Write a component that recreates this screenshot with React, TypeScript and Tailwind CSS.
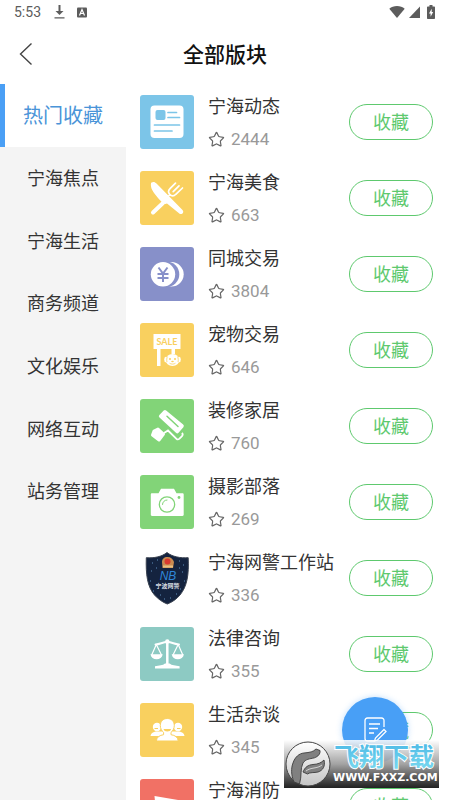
import { Star } from "lucide-react";
import type { ReactNode } from "react";

const NewsIcon = () => (
  <>
    <rect x="10.5" y="10.5" width="33" height="32.5" rx="4" fill="#fff" />
    <rect x="15.5" y="15" width="10" height="10" rx="2" fill="#7cc5e8" />
    <path
      d="M28 17.5h8.500M28 22.500h11.500M14.500 30h25M14.500 36h17.500"
      stroke="#7cc5e8"
      strokeWidth="1.700"
      strokeLinecap="round"
    />
  </>
);

const FoodIcon = () => (
  <>
    <path d="M13 41.5 23 32" stroke="#fff" strokeWidth="4" strokeLinecap="round" />
    <path
      d="M11.500 11.500c2-1.200 3.500-.5 5 .9l26 26.500c1.600 1.700.4 4.200-1.600 4.200-1 0-1.500-.3-2.200-1L27 32.500c-1.500.8-3.400.4-5-1.300-5-5.500-10.500-11-11-16-.2-1.800-.2-3 .5-3.700z"
      fill="#fff"
    />
    <path
      d="m35.500 12.200-5.500 5.500c-2 2-1.800 4-.2 5.800s4 2 6-.2l6.700-6.300M39 14.800l-5.800 5.800M30 23.500l-2 2"
      stroke="#fff"
      strokeWidth="1.700"
      strokeLinecap="round"
      fill="none"
    />
  </>
);

const YenIcon = () => (
  <>
    <circle cx="31.5" cy="27.300" r="12.200" fill="#fff" />
    <circle cx="26.500" cy="27.300" r="12.800" fill="#8790c9" />
    <circle cx="23" cy="27.300" r="12.200" fill="#fff" />
    <path
      d="m18.500 20.500 4.500 6 4.500-6M23 26.500v8.500M17.500 27h11M17.500 31h11"
      stroke="#8790c9"
      strokeWidth="2"
      fill="none"
    />
  </>
);

const SaleIcon = () => (
  <>
    <path d="M13.500 11h27v15h-5.500v5h-3.500v-5h-11v17H17V26h-3.500z" fill="#fff" />
    <text
      x="27"
      y="21.500"
      textAnchor="middle"
      className="font-['Lato'] text-[9px] font-bold"
      fill="#f9d05f"
    >
      SALE
    </text>
    <ellipse cx="32.500" cy="37" rx="7" ry="6" fill="#fff" />
    <ellipse cx="25.800" cy="36.500" rx="1.600" ry="2.800" fill="#fff" />
    <ellipse cx="39.200" cy="36.500" rx="1.600" ry="2.800" fill="#fff" />
    <path
      d="M27.500 33.500c-.8 1.500-1 4-.5 5.500M37.500 33.500c.8 1.500 1 4 .5 5.500M29.500 40.200c1.500 1.200 4.500 1.200 6 0"
      stroke="#f9d05f"
      strokeWidth=".8"
      fill="none"
    />
    <circle cx="30" cy="36" r="1" fill="#f9d05f" />
    <circle cx="35" cy="36" r="1" fill="#f9d05f" />
    <ellipse cx="32.500" cy="38.500" rx="1.300" ry=".8" fill="#f9d05f" />
  </>
);

const RollerIcon = () => (
  <>
    <path
      d="M25 12.800 42 27l-4.800 5.500L20.700 17.200z"
      fill="#fff"
      stroke="#fff"
      strokeWidth="3.600"
      strokeLinejoin="round"
    />
    <path d="m27 17.300 11 10.200" stroke="#82d478" strokeWidth="1.500" strokeLinecap="round" />
    <path
      d="m18 30 5.500 5-4.500 6-6.500-5 1.500-4z"
      fill="#fff"
      stroke="#fff"
      strokeWidth="3"
      strokeLinejoin="round"
    />
    <path
      d="m24 34 4-2.500 8.500 8.300c1 .9 2 .7 3-.2l2.500-2.500c1-1.100 1-2 0-3.200"
      stroke="#fff"
      strokeWidth="1.800"
      fill="none"
    />
  </>
);

const CameraIcon = () => (
  <>
    <path
      d="M12 18.300h6.500l2.500-4.600h13l2.500 4.600h6c.7 0 1.200.5 1.200 1.200v20.300c0 .7-.5 1.200-1.200 1.200H12c-.7 0-1.200-.5-1.200-1.200V19.500c0-.7.5-1.200 1.200-1.200z"
      fill="#fff"
    />
    <circle cx="27" cy="29.500" r="7.700" fill="none" stroke="#82d478" strokeWidth="1.300" />
    <path
      d="M22.500 29.500c0-2.500 2-4.500 4.500-4.500"
      fill="none"
      stroke="#82d478"
      strokeWidth="1"
      strokeLinecap="round"
    />
    <circle cx="39" cy="22.500" r="1.400" fill="#82d478" />
  </>
);

const ShieldIcon = () => (
  <>
    <path
      d="M27 1.500c5 4.200 13.500 5.800 21.200 5.200.8 17-1 28.500-8.200 37.300C36.500 48.200 32 51.200 27.300 53 22.500 51.200 18 48 14.500 44 7.300 35.500 5.800 24 6.300 6.700 14 7.300 22 5.700 27 1.500z"
      fill="#14233f"
      stroke="#3a4250"
      strokeWidth="1"
    />
    <path
      d="M12 12h1M17 9h1M39 10h1M43 14h1M11 20h1M16 17h1M42 21h1M39 17h1M13 40h1M20 44h1M36 43h1M30 47h1M24 48h1M44 30h1M10 30h1M40 38h1"
      stroke="#5f8fbd"
      strokeWidth="1"
    />
    <path d="M22 11c0-3 2-5 5.500-5S33 8 34 11l-1 6H22.500z" fill="#c98a50" />
    <circle cx="27.500" cy="10.500" r="3" fill="#d8392f" />
    <path d="M23 15.500h10" stroke="#e9bf80" strokeWidth="2" />
    <text
      x="28"
      y="29"
      textAnchor="middle"
      className="font-['Liberation_Sans'] text-[12px] italic"
      fill="#2f86d8"
    >
      NB
    </text>
    <text
      x="27.500"
      y="37"
      textAnchor="middle"
      className="font-['Noto_Sans_CJK_SC'] text-[6px] font-bold"
      fill="#d5dae0"
    >
      宁波网警
    </text>
  </>
);

const ScalesIcon = () => (
  <>
    <path d="M27.300 14v24" stroke="#fff" strokeWidth="2.500" />
    <circle cx="27.300" cy="14.500" r="2.200" fill="#fff" />
    <path
      d="M15.500 17.500c4.500 0 7-2.500 11.800-2.500s7.300 2.500 11.700 2.500"
      stroke="#fff"
      strokeWidth="2"
      strokeLinecap="round"
      fill="none"
    />
    <path
      d="m16.300 17.500-4.600 10.500M16.300 17.500 21.500 28M38.200 17.500 33 28M38.200 17.500l4.600 10.500"
      stroke="#fff"
      strokeWidth="1.200"
    />
    <path
      d="M10.500 27.300h12.200c-.5 3.200-3 5-6.100 5s-5.600-1.800-6.100-5zM31.700 27.300h12.200c-.5 3.200-3 5-6.100 5s-5.600-1.800-6.100-5z"
      fill="#fff"
    />
    <path d="M15 41.500v-2.300c4-.9 8-.7 10-2.700h4.600c2 2 6 1.800 10 2.700v2.300z" fill="#fff" />
  </>
);

const PeopleIcon = () => (
  <>
    <circle cx="17" cy="24" r="4.200" fill="#fff" />
    <circle cx="38" cy="24" r="4.200" fill="#fff" />
    <path d="M10.500 33c.5-2.500 2-3.800 5-4.500h24c3 .7 4.500 2 5 4.500z" fill="#fff" />
    <path
      d="M27.300 15.500c4.200 0 7 3 7 7 0 3-1.500 5.500-3.300 6.900v2.300c4 .6 6.800 2.300 7.300 6.300h-22c.5-4 3.300-5.700 7.300-6.300v-2.300c-1.800-1.400-3.300-3.900-3.300-6.900 0-4 2.800-7 7-7z"
      fill="#fff"
      stroke="#f9d05f"
      strokeWidth="1"
    />
    <path d="M23.500 26h7.600c-.6 1.800-2 2.500-3.800 2.500s-3.200-.7-3.800-2.500z" fill="#f9d05f" />
    <path d="M14.500 25.500h3.500M37 25.500h3.500" stroke="#f9d05f" strokeWidth="1" />
  </>
);

const FireIcon = () => (
  <path d="M14.500 17 41 21.500v17L27 43l-11-9z" fill="#fff" />
);

type Board = {
  name: string;
  count: number;
  color: string;
  icon: ReactNode;
};

const categories = [
  "热门收藏",
  "宁海焦点",
  "宁海生活",
  "商务频道",
  "文化娱乐",
  "网络互动",
  "站务管理",
];

const boards: Board[] = [
  { name: "宁海动态", count: 2444, color: "bg-[#7cc5e8]", icon: <NewsIcon /> },
  { name: "宁海美食", count: 663, color: "bg-[#f9d05f]", icon: <FoodIcon /> },
  { name: "同城交易", count: 3804, color: "bg-[#8790c9]", icon: <YenIcon /> },
  { name: "宠物交易", count: 646, color: "bg-[#f9d05f]", icon: <SaleIcon /> },
  { name: "装修家居", count: 760, color: "bg-[#82d478]", icon: <RollerIcon /> },
  { name: "摄影部落", count: 269, color: "bg-[#82d478]", icon: <CameraIcon /> },
  { name: "宁海网警工作站", count: 336, color: "bg-white", icon: <ShieldIcon /> },
  { name: "法律咨询", count: 355, color: "bg-[#8dcac3]", icon: <ScalesIcon /> },
  { name: "生活杂谈", count: 345, color: "bg-[#f9d05f]", icon: <PeopleIcon /> },
  { name: "宁海消防", count: 312, color: "bg-[#f17165]", icon: <FireIcon /> },
];

const StatusBar = () => (
  <div className="flex h-6 shrink-0 items-center justify-between pl-[14px] pr-[15px] text-[#5c5c5c]">
    <div className="flex items-center">
      <span className="font-['Roboto'] text-[14px] leading-6">5:53</span>
      <svg className="ml-[13px] h-[14px] w-[11px]" viewBox="0 0 11 14" fill="currentColor">
        <path d="M4.500 0h2v6H9.500l-4 4-4-4h3zM.5 12.300h10v1.200H.5z" />
      </svg>
      <svg className="ml-3 h-[11px] w-[10px]" viewBox="0 0 10 11" fill="currentColor">
        <rect y=".5" width="10" height="10" rx="1" />
        <path d="m2.500 8.500 2.500-6 2.500 6M3.500 6.500h3" stroke="#fff" strokeWidth="1.200" fill="none" />
      </svg>
    </div>
    <div className="flex items-center">
      <svg className="h-3 w-4" viewBox="0 0 16 12" fill="currentColor">
        <path d="M8 12 .3 2.700C2.300 1 5 0 8 0s5.700 1 7.700 2.700z" />
      </svg>
      <svg className="ml-1 h-3 w-[11px]" viewBox="0 0 11 12" fill="currentColor">
        <path d="M11 .5V12H0z" />
      </svg>
      <svg className="ml-[7px] h-[14px] w-2" viewBox="0 0 8 14" fill="currentColor">
        <path d="M2.500 0h3v1.500H7c.6 0 1 .4 1 1V13c0 .6-.4 1-1 1H1c-.6 0-1-.4-1-1V2.500c0-.6.4-1 1-1h1.500z" />
        <path d="M4.700 3.800 2 8.500h1.600v3.300L6.200 7H4.700z" fill="#fff" />
      </svg>
    </div>
  </div>
);

const BoardRow = ({ board }: { board: Board }) => (
  <li className="flex h-[76px] shrink-0 items-center">
    <svg
      className={`h-[54px] w-[54px] shrink-0 rounded-[3px] ${board.color}`}
      viewBox="0 0 54 54"
      aria-hidden="true"
    >
      {board.icon}
    </svg>
    <div className="ml-[14px] min-w-0 flex-1">
      <p className="truncate text-[18px] leading-6 text-[#333]">{board.name}</p>
      <p className="mt-[10px] flex items-center gap-[6px] text-[#999]">
        <Star className="h-[17px] w-[17px] text-[#666]" strokeWidth={1.7} />
        <span className="font-['Roboto'] text-[17px] leading-6">{board.count}</span>
      </p>
    </div>
    <button
      type="button"
      className="h-9 w-[84px] shrink-0 rounded-full border border-[#5ec96e] pb-[2px] text-[18px] leading-6 text-[#5ec96e]"
    >
      收藏
    </button>
  </li>
);

// Site stamp laid over the bottom corner of the page
const SiteStamp = () => (
  <div className="absolute right-[11px] bottom-3 flex h-12 w-[155px] items-center bg-linear-to-b from-white/85 via-[#999]/90 to-[#222]">
    <svg className="ml-px h-[46px] w-[46px] shrink-0" viewBox="0 0 46 46">
      <defs>
        <linearGradient id="disc" x1="0" y1="0" x2="0" y2="1">
          <stop offset="0" stopColor="#ffffff" />
          <stop offset="1" stopColor="#c4c4c4" />
        </linearGradient>
      </defs>
      <circle cx="23" cy="23" r="22" fill="url(#disc)" stroke="#444" />
      <path
        d="M9 41C6 34 6 27 8 22c2-6 6-9.500 11-10 6-.6 9-1 12-4l4 1.500c.5 3.500-2 6-5.500 7.300-5 1.200-9 1.200-11.500 5.200-3 5.500-1 13-3.500 21z"
        fill="#808080"
        stroke="#3c3c3c"
        strokeWidth=".9"
      />
      <path
        d="M18 31c2-5 5-7 10-7.500 5-.3 8-1.500 11-4.500 1.500 6-1 10.500-6 12-4 1-8 0-10.500 2z"
        fill="#808080"
        stroke="#3c3c3c"
        strokeWidth=".9"
      />
      <path d="M21 30c5-4 11-2 16-6" stroke="#ddd" strokeWidth=".9" fill="none" />
    </svg>
    <div className="ml-[2px] flex flex-col whitespace-nowrap">
      <svg className="h-7 w-[104px]" viewBox="0 0 104 28">
        <defs>
          <linearGradient id="ink" x1="0" y1="0" x2="0" y2="1">
            <stop offset="0" stopColor="#45b4e4" />
            <stop offset="1" stopColor="#7fdcf0" />
          </linearGradient>
        </defs>
        <text
          x="1"
          y="23"
          className="font-['Noto_Sans_CJK_SC'] text-[25px] font-bold"
          fill="url(#ink)"
          stroke="#fff"
          strokeWidth="2"
          paintOrder="stroke"
        >
          飞翔下载
        </text>
      </svg>
      <span className="font-['DejaVu_Sans'] text-[11px] leading-[14px] font-bold text-white">
        WWW.FXXZ.COM
      </span>
    </div>
  </div>
);

const App = () => {
  return (
    <div className="relative flex h-screen flex-col overflow-hidden bg-white font-['Noto_Sans_CJK_SC',sans-serif]">
      <StatusBar />
      {/* header */}
      <header className="grid h-[60px] shrink-0 grid-cols-[1fr_auto_1fr] items-center">
        <button type="button" aria-label="返回" className="ml-[19px] h-6 w-[14px]">
          <svg className="h-6 w-[14px]" viewBox="0 0 14 24">
            <path d="M12.500 1.500 1.500 12l11 10.500" stroke="#444" strokeWidth="1.400" fill="none" />
          </svg>
        </button>
        <h1 className="pb-[2px] text-[21px] leading-8 font-medium text-[#111]">全部版块</h1>
      </header>
      <div className="flex min-h-0 flex-1">
        {/* categories */}
        <nav className="w-[28%] shrink-0 bg-[#f4f4f4]">
          <div className="grid h-[438px] grid-rows-7">
            {categories.map((name, index) => (
              <button
                key={name}
                type="button"
                className={
                  index === 0
                    ? "border-l-[5px] border-[#4a9ff5] bg-white pr-[5px] text-[20px] text-[#4a94d8]"
                    : "text-[18px] text-[#333]"
                }
              >
                {name}
              </button>
            ))}
          </div>
        </nav>
        {/* boards */}
        <ul className="flex min-w-0 flex-1 flex-col overflow-hidden pr-[17px] pl-[14px]">
          {boards.map((board) => (
            <BoardRow key={board.name} board={board} />
          ))}
        </ul>
      </div>
      <button
        type="button"
        aria-label="发帖"
        className="absolute right-[42px] bottom-[37px] flex h-[66px] w-[66px] items-center justify-center rounded-full bg-[#489ff6] shadow-[0_0_6px_#489ff655]"
      >
        <svg className="h-[26px] w-6" viewBox="0 0 24 26" fill="none" stroke="#fff" strokeWidth="1.300">
          <path d="M21 10V3.500c0-1.400-1-2.500-2.500-2.500h-14C3 1 2 2.100 2 3.500v18C2 23 3 24 4.500 24H12M6 7h11M6 11.500h9M6 16h5" />
          <path d="m21 12.500 2 2-8.500 8.500-3 1 1-3z" />
        </svg>
      </button>
      <SiteStamp />
    </div>
  );
};

export default App;
